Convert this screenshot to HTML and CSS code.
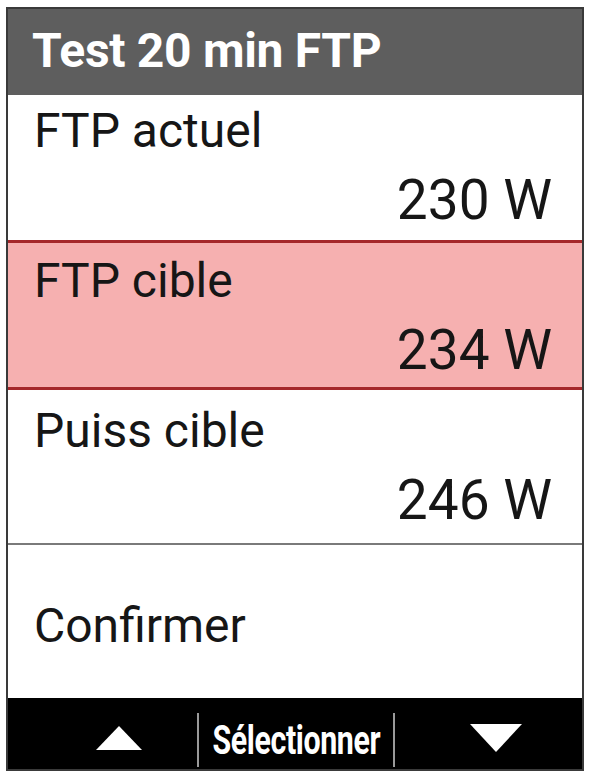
FILE: index.html
```html
<!DOCTYPE html>
<html lang="fr">
<head>
<meta charset="utf-8">
<link rel="stylesheet" href="styles.css">
</head>
<body>
<div class="screen">
  <div class="header">Test 20 min FTP</div>
  <div class="row">
    <div class="label">FTP actuel</div>
    <div class="value">230 W</div>
  </div>
  <div class="row selected">
    <div class="label">FTP cible</div>
    <div class="value">234 W</div>
  </div>
  <div class="row last">
    <div class="label">Puiss cible</div>
    <div class="value">246 W</div>
  </div>
  <div class="confirm">Confirmer</div>
  <div class="bar">
    <div class="btn up">
      <svg width="46" height="24" viewBox="0 0 46 24"><polygon points="23,0 46,24 0,24" fill="#fff"/></svg>
    </div>
    <div class="btn mid"><span class="sel">Sélectionner</span></div>
    <div class="btn down">
      <svg width="52" height="28" viewBox="0 0 52 28"><polygon points="0,0 52,0 26,28" fill="#fff"/></svg>
    </div>
  </div>
</div>
</body>
</html>
```
FILE: styles.css
```css
html, body {
  margin: 0;
  padding: 0;
  background: #fff;
}
body {
  font-family: Roboto, "Noto Sans", "Liberation Sans", sans-serif;
  color: #161616;
}
.screen {
  margin: 7px 0 0 6px;
  width: 574px;
  border: 2px solid #3a3a3a;
  display: flex;
  flex-direction: column;
}
.header {
  height: 86px;
  background: #5e5e5e;
  color: #fff;
  font-weight: 700;
  font-size: 48px;
  line-height: 84px;
  padding-left: 24px;
  letter-spacing: -0.3px;
}
.row {
  height: 145px;
  display: flex;
  flex-direction: column;
  padding: 0 30px 0 26px;
  box-sizing: border-box;
}
.label {
  font-size: 48px;
  line-height: 72px;
}
.value {
  font-size: 55px;
  line-height: 66px;
  text-align: right;
}
.row.selected {
  height: 150px;
  background: #f6b0b0;
  border-top: 3px solid #a5282b;
  border-bottom: 3px solid #a5282b;
  padding-top: 2px;
}
.row.last {
  height: 155px;
  border-bottom: 2px solid #7a7a7a;
  padding-top: 5px;
}
.confirm {
  height: 153px;
  font-size: 48px;
  line-height: 162px;
  padding-left: 26px;
}
.bar {
  height: 71px;
  background: #000;
  display: flex;
  align-items: center;
}
.btn {
  display: flex;
  justify-content: center;
  align-items: center;
  height: 100%;
  box-sizing: border-box;
  min-width: 0;
}
.btn.up {
  flex: 0 0 189px;
  padding-left: 32px;
  padding-top: 8px;
}
.btn.down {
  flex: 1 1 0;
  padding-left: 14px;
  padding-top: 8px;
}
.btn.mid {
  flex: 0 0 198px;
  width: 198px;
  border-left: 2px solid #9a9a9a;
  border-right: 2px solid #9a9a9a;
  height: 54px;
  margin-top: 12px;
}
.sel {
  color: #fff;
  font-weight: 700;
  font-size: 41px;
  display: inline-block;
  flex: none;
  transform: scaleX(0.74);
  letter-spacing: -0.5px;
  white-space: nowrap;
}
```
